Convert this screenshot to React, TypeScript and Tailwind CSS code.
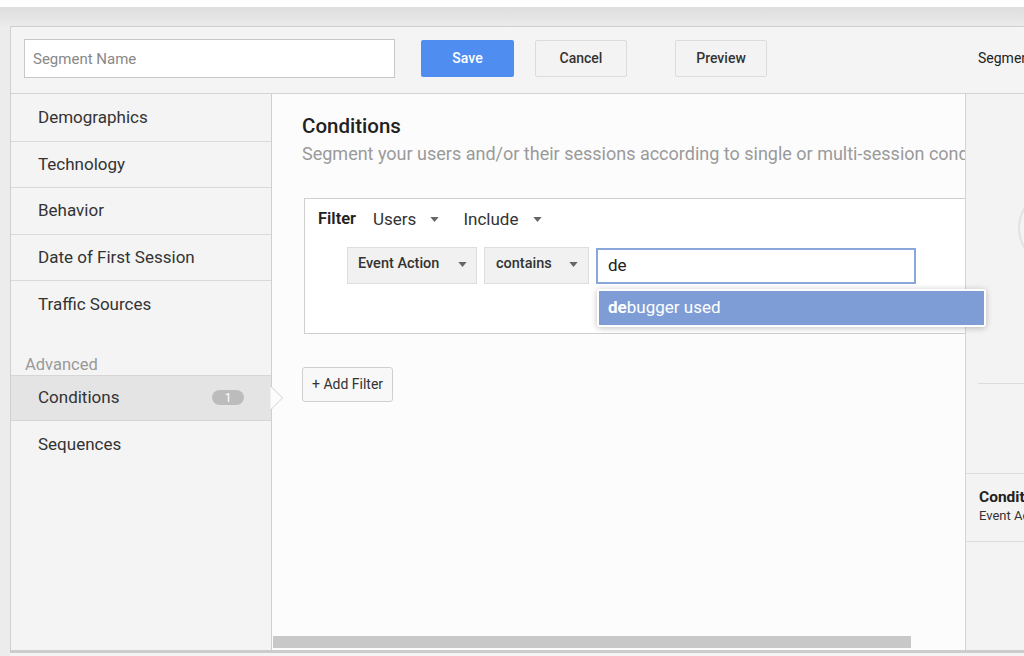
import React from "react";

const font = { fontFamily: "Roboto, 'Liberation Sans', sans-serif" };

function Caret({ className = "" }: { className?: string }) {
  return (
    <svg viewBox="0 0 10 6" className={`w-[9px] h-[5px] shrink-0 ${className}`}>
      <path d="M0 0h10L5 6z" fill="#666" />
    </svg>
  );
}

function NavItem({ label, active, badge, last }: { label: string; active?: boolean; badge?: string; last?: boolean }) {
  return (
    <div
      className={`relative z-10 flex items-center h-[46.5px] pl-[27px] pr-[27px] text-[17px] text-[#333] ${
        active ? "bg-[#e4e4e4] border-y border-[#d6d6d6]" : last ? "" : "border-b border-[#d9d9d9]"
      }`}
    >
      <span className="flex-1">{label}</span>
      {badge && (
        <span className="flex items-center justify-center w-[32px] h-[15px] rounded-full bg-[#bcbcbc] text-white text-[12px] leading-none">
          {badge}
        </span>
      )}
      {active && (
        <svg viewBox="0 0 14 24" className="absolute right-[-13px] top-[10px] w-[14px] h-[24px]">
          <path d="M0.5 0L12.5 12L0.5 24Z" fill="#fcfcfc" />
          <path d="M0.5 0L12.5 12L0.5 24" fill="none" stroke="#d0d0d0" strokeWidth="1" />
        </svg>
      )}
    </div>
  );
}

export default function App() {
  return (
    <div className="w-[1024px] h-[656px] overflow-hidden bg-[#ececec] flex flex-col" style={font}>
      <div className="h-[7px] bg-white shrink-0" />
      <div className="h-[19px] shrink-0 bg-gradient-to-b from-[#dedede] to-[#ebebeb]" />
      <div className="ml-[10px] w-[1030px] h-[624px] shrink-0 border-t border-l border-[#cfcfcf] bg-[#f4f4f4] flex flex-col">
        {/* header */}
        <div className="h-[67px] shrink-0 flex items-center pb-[3px] border-b border-[#d4d4d4]">
          <input
            placeholder="Segment Name"
            className="shrink-0 ml-[13px] w-[371px] h-[39px] border border-[#c8c8c8] bg-white px-[8px] text-[15px] text-[#333] placeholder:text-[#888] outline-none"
          />
          <button className="shrink-0 ml-[26px] w-[93px] h-[37px] rounded-[2px] bg-[#4f8ef0] text-white text-[14px] font-medium">
            Save
          </button>
          <button className="shrink-0 ml-[21px] w-[92px] h-[37px] rounded-[2px] border border-[#dcdcdc] bg-[#f3f3f3] text-[#333] text-[14px] font-medium">
            Cancel
          </button>
          <button className="shrink-0 ml-[48px] w-[92px] h-[37px] rounded-[2px] border border-[#dcdcdc] bg-[#f3f3f3] text-[#333] text-[14px] font-medium">
            Preview
          </button>
          <span className="shrink-0 ml-[211px] text-[14px] text-[#222] whitespace-nowrap">Segment Summary</span>
        </div>

        {/* body */}
        <div className="flex flex-1 min-h-0">
          <div className="relative z-10 w-[261px] shrink-0 border-r border-[#cfcfcf] flex flex-col pt-[1px]">
            <NavItem label="Demographics" />
            <NavItem label="Technology" />
            <NavItem label="Behavior" />
            <NavItem label="Date of First Session" />
            <NavItem label="Traffic Sources" last />
            <div className="h-[47px] flex items-end pl-[14px] pb-0 text-[16.5px] leading-[20px] text-[#999]">Advanced</div>
            <NavItem label="Conditions" active badge="1" />
            <NavItem label="Sequences" last />
          </div>

          <div className="relative w-[694px] shrink-0 bg-[#fcfcfc] border-r border-[#d4d4d4] flex flex-col">
            <div className="pl-[30px] pt-[19px]">
              <h1 className="text-[20.5px] font-medium text-[#222] leading-[26px]">Conditions</h1>
              <div className="overflow-hidden whitespace-nowrap text-[18px] text-[#9a9a9a] mt-[3px] leading-[24px]">
                Segment your users and/or their sessions according to single or multi-session conditions.
              </div>
            </div>

            <div className="relative ml-[32px] mt-[32px] h-[136px] border border-r-0 border-[#cfcfcf] bg-white">
              <div className="flex items-center h-[41px] pl-[13px] text-[17px] text-[#333]">
                <span className="font-semibold text-[#222] text-[16.5px]">Filter</span>
                <span className="ml-[17px]">Users</span>
                <Caret className="ml-[14px]" />
                <span className="ml-[24px]">Include</span>
                <Caret className="ml-[15px]" />
              </div>
              <div className="flex items-center mt-[7px] pl-[42px]">
                <div className="flex items-center w-[130px] h-[37px] border border-[#dedede] bg-[#f1f1f1] pl-[10px] pb-[3px] text-[14.5px] font-medium text-[#333]">
                  <span className="flex-1">Event Action</span>
                  <Caret className="mr-[9px]" />
                </div>
                <div className="ml-[7px] flex items-center w-[105px] h-[37px] border border-[#dedede] bg-[#f1f1f1] pl-[11px] pb-[3px] text-[14.5px] font-medium text-[#333]">
                  <span className="flex-1">contains</span>
                  <Caret className="mr-[10px]" />
                </div>
                <div className="ml-[7px] flex items-center w-[320px] h-[36px] border-2 border-[#8aa7dc] bg-white pl-[10px] text-[17px] text-[#222]">
                  de
                </div>
              </div>
              <div className="absolute z-20 left-[292px] top-[90px] w-[389px] h-[38px] bg-white rounded-[3px] shadow-[0_1px_6px_rgba(0,0,0,0.25)] p-[2px]">
                <div className="h-full bg-[#7e9dd6] flex items-center pl-[9px] text-[17px] text-white">
                  <span className="font-bold">de</span>bugger used
                </div>
              </div>
            </div>

            <button className="self-start ml-[30px] mt-[33px] h-[35px] px-[9px] rounded-[3px] border border-[#cfcfcf] bg-[#f8f8f8] text-[14px] text-[#333]">
              + Add Filter
            </button>

            <div className="mt-auto mb-[2px] ml-[1px] w-[638px] h-[12px] bg-[#c8c8c8]" />
          </div>

          <div className="flex-1 relative overflow-hidden bg-[#f3f3f3]">
            <div className="absolute left-[52px] top-[96px] w-[90px] h-[76px] rounded-full border-2 border-[#e2e2e2]" />
            <div className="absolute left-[12px] right-0 top-[289px] border-t border-[#dcdcdc]" />
            <div className="absolute left-0 right-0 top-[379px] border-t border-[#dcdcdc]" />
            <div className="absolute left-[13px] top-[393px] whitespace-nowrap">
              <div className="text-[15.5px] font-bold text-[#222] leading-[20px]">Conditions</div>
              <div className="text-[13px] text-[#333] leading-[18px]">Event Action</div>
            </div>
            <div className="absolute left-0 right-0 top-[447px] border-t border-[#dcdcdc]" />
          </div>
        </div>
      </div>
      <div className="ml-[10px] h-[3px] shrink-0 bg-[#cccccc]" />
      <div className="flex-1 bg-[#f4f4f4] ml-[10px]" />
    </div>
  );
}
